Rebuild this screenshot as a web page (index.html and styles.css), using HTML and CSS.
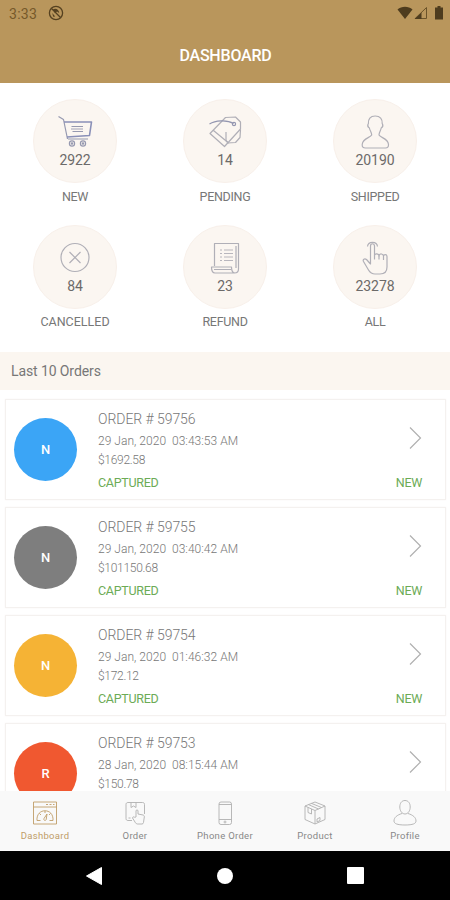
FILE: index.html
```html
<!DOCTYPE html>
<html lang="en">
<head>
    <meta charset="UTF-8">
    <meta name="viewport" content="width=device-width, initial-scale=1.0">
    <title>Dashboard</title>
    <link rel="stylesheet" href="styles.css">
</head>
<body>
    <div class="app">
        <header class="header">
            <div class="status-bar">
                <span class="clock">3:33</span>
                <svg class="status-app" width="16" height="16" viewBox="0 0 16 16">
                    <circle cx="8" cy="8" r="6.6" fill="none" stroke="#554120" stroke-width="1.3"/>
                    <path d="M5 4.2c3-1.6 6 .3 6.2 3.8l-2.2-1.5L7 8.2zM4.2 8l3 3.5-2 .2z" fill="#554120"/>
                    <path d="M3.5 3.5l9 9" stroke="#554120" stroke-width="1.2"/>
                </svg>
                <div class="status-icons">
                    <svg width="16" height="14" viewBox="0 0 16 14">
                        <path d="M.5 3.5C4.500-.3 11.500-.3 15.500 3.500L8 13z" fill="#4e3c1e"/>
                    </svg>
                    <svg width="14" height="14" viewBox="0 0 14 14">
                        <path d="M12.5 1.5v11H1.2z" fill="none" stroke="#6b5329" stroke-width="1"/>
                        <path d="M7.5 6.5V13H.5z" fill="#4e3c1e"/>
                    </svg>
                    <svg class="battery" width="8" height="14" viewBox="0 0 8 14">
                        <path d="M2.5 0h3v1.500H8v12H0v-12h2.500z" fill="#4e3c1e"/>
                    </svg>
                </div>
            </div>
            <h1 class="title">DASHBOARD</h1>
        </header>

        <main class="content">
            <section class="stats">
                <div class="stat">
                    <div class="stat-circle">
                        <svg class="stat-icon blue" viewBox="0 0 36 34">
                            <path d="M1.5 1.500l5 3 4 19.500"/>
                            <path class="basket" d="M7 7h27.500l-2 13.500L10 22"/>
                            <path d="M11 24h20M14.500 11.500H26M15.500 16.500H26"/>
                            <path class="thin" d="M14 14h12"/>
                            <circle cx="15" cy="28.500" r="2.600"/><circle cx="15" cy="28.500" r=".7"/>
                            <circle cx="26" cy="28.500" r="2.600"/><circle cx="26" cy="28.500" r=".7"/>
                        </svg>
                        <span class="stat-number">2922</span>
                    </div>
                    <div class="stat-label">NEW</div>
                </div>
                <div class="stat">
                    <div class="stat-circle">
                        <svg class="stat-icon" viewBox="0 0 36 34">
                            <path d="M3 18.500L18.500 2.500l10-.5 5 5v7L17.500 31.500zM6.500 15.500l14.500 12"/>
                            <path d="M33.500 14.500l-.5 8-4.500 5-8 .5M19 17v8.500l2.500 3"/>
                            <path class="ink" d="M2.500 9C8 5.500 20 4.500 26.500 8.500"/>
                            <circle class="ink" cx="27" cy="9" r="1.600"/>
                        </svg>
                        <span class="stat-number">14</span>
                    </div>
                    <div class="stat-label">PENDING</div>
                </div>
                <div class="stat">
                    <div class="stat-circle">
                        <svg class="stat-icon" viewBox="0 0 36 34">
                            <path d="M18.200 1c5 0 7.300 3 7 7.500 1 1.500.5 3.500-1 4.500-.5 3-2.200 4-2.200 7 1.500 3 9 3 9.500 9.500.2 2.500-1 3.500-3 3.500h-20c-2.500 0-3.500-1-3.300-3.500.5-6.500 8-6.500 9.500-9.500 0-3-1.800-4-2.300-7-1.500-1-2-3-1-4.500-.3-4.500 1.800-7.500 6.800-7.500z"/>
                        </svg>
                        <span class="stat-number">20190</span>
                    </div>
                    <div class="stat-label">SHIPPED</div>
                </div>
                <div class="stat">
                    <div class="stat-circle">
                        <svg class="stat-icon" viewBox="0 0 36 34">
                            <circle cx="18" cy="16.500" r="14"/>
                            <path d="M12.500 11l11 11M23.500 11l-11 11"/>
                        </svg>
                        <span class="stat-number">84</span>
                    </div>
                    <div class="stat-label cancelled">CANCELLED</div>
                </div>
                <div class="stat">
                    <div class="stat-circle">
                        <svg class="stat-icon" viewBox="0 0 36 34">
                            <path d="M7.500 25V2.500h24V28c0 2.500-1.500 4-4 4H8c-2.500 0-3.500-2-3.500-6h20c0 4 1 6 3.500 6M29 5v22M7 28.500h17"/>
                            <path class="thin" d="M13 9h2M17 9h9M13 12.500h2M17 12.500h9M13 16h2M17 16h9M13 19.500h2M17 19.500h9"/>
                        </svg>
                        <span class="stat-number">23</span>
                    </div>
                    <div class="stat-label">REFUND</div>
                </div>
                <div class="stat">
                    <div class="stat-circle">
                        <svg class="stat-icon" viewBox="0 0 36 34">
                            <path d="M13.500 23l-4-4.500c-2-1.500-4 0-3 2l5 8.500c1.500 2.500 3.500 4 6.500 4h5c4.500 0 7-2.500 7-7V15.500c0-2.500-3.500-2.500-3.500 0 0-3-4-3.500-4.500-.5 0-2.500-4-3-4.500-.5V5c0-3-4-3-4 0z"/>
                            <path d="M17.500 14.500v4M22 15v3.500M26.500 16v3M10.500 5.500c.5-5.500 9.500-5.500 10 0"/>
                        </svg>
                        <span class="stat-number">23278</span>
                    </div>
                    <div class="stat-label">ALL</div>
                </div>
            </section>

            <h2 class="section-title">Last 10 Orders</h2>

            <section class="orders">
                <article class="order">
                    <div class="avatar blue-bg">N</div>
                    <div class="order-info">
                        <div class="order-id">ORDER # 59756</div>
                        <div class="order-date">29 Jan, 2020&nbsp; 03:43:53 AM</div>
                        <div class="order-price">$1692.58</div>
                        <div class="order-state">CAPTURED</div>
                    </div>
                    <div class="order-side">
                        <svg class="chevron" viewBox="0 0 13 24"><path d="M1 1.500L11.500 12 1 22.500"/></svg>
                        <span class="order-tag">NEW</span>
                    </div>
                </article>
                <article class="order">
                    <div class="avatar gray-bg">N</div>
                    <div class="order-info">
                        <div class="order-id">ORDER # 59755</div>
                        <div class="order-date">29 Jan, 2020&nbsp; 03:40:42 AM</div>
                        <div class="order-price">$101150.68</div>
                        <div class="order-state">CAPTURED</div>
                    </div>
                    <div class="order-side">
                        <svg class="chevron" viewBox="0 0 13 24"><path d="M1 1.500L11.500 12 1 22.500"/></svg>
                        <span class="order-tag">NEW</span>
                    </div>
                </article>
                <article class="order">
                    <div class="avatar yellow-bg">N</div>
                    <div class="order-info">
                        <div class="order-id">ORDER # 59754</div>
                        <div class="order-date">29 Jan, 2020&nbsp; 01:46:32 AM</div>
                        <div class="order-price">$172.12</div>
                        <div class="order-state">CAPTURED</div>
                    </div>
                    <div class="order-side">
                        <svg class="chevron" viewBox="0 0 13 24"><path d="M1 1.500L11.500 12 1 22.500"/></svg>
                        <span class="order-tag">NEW</span>
                    </div>
                </article>
                <article class="order">
                    <div class="avatar red-bg">R</div>
                    <div class="order-info">
                        <div class="order-id">ORDER # 59753</div>
                        <div class="order-date">28 Jan, 2020&nbsp; 08:15:44 AM</div>
                        <div class="order-price">$150.78</div>
                    </div>
                    <div class="order-side">
                        <svg class="chevron" viewBox="0 0 13 24"><path d="M1 1.500L11.500 12 1 22.500"/></svg>
                    </div>
                </article>
            </section>
        </main>

        <nav class="tabs">
            <a class="tab active">
                <svg class="tab-icon" viewBox="0 0 26 26">
                    <path d="M1.500 2h23v22h-23zM1.500 7h23M14 4.500h2M17.500 4.500h2M21 4.500h1.500"/>
                    <path d="M5 20.500c-1-13 17-13 16 0h-3.500M5 20.500h3.500M13 11v2M7.500 13.500L9 15M18.500 13.500L17 15"/>
                    <path d="M15 14l-3 4.500c-.7 2 1.500 2.800 2.200 1z"/>
                </svg>
                <span>Dashboard</span>
            </a>
            <a class="tab">
                <svg class="tab-icon" viewBox="0 0 26 26">
                    <path d="M10 20.500H6c-1.300 0-2-.7-2-2V4.500c0-1.300.7-2 2-2h14.500c1.300 0 2 .7 2 2V14M9 2.500v5l2.500-1.500L14 7.500v-5M6.500 18h2"/>
                    <path d="M14 17v-6c0-1.500 2-1.500 2 0v3l5 1c1 .3 1.500 1 1.300 2l-.8 5.500c-.2 1-.7 1.500-1.500 1.500h-4.500c-1 0-1.500-.5-2-1.200L10.500 18c0-1.200 1.500-1.500 2.200-.7z"/>
                </svg>
                <span>Order</span>
            </a>
            <a class="tab">
                <svg class="tab-icon" viewBox="0 0 26 26">
                    <rect x="7" y="2" width="12.500" height="22.500" rx="2"/>
                    <path d="M7 4.500h12.500M7 19.500h12.500"/>
                    <circle cx="13" cy="22" r="1"/>
                </svg>
                <span>Phone Order</span>
            </a>
            <a class="tab">
                <svg class="tab-icon" viewBox="0 0 26 26">
                    <path d="M13 2l10 4v13.500L13 24 3 19.500V6zM3 6l10 4.500L23 6M13 10.500V24M6.500 4.600l10 4.400M9.500 3.400l10 4.100M6 7.500v5L9.500 14V9M15 19l3-1.500v3L15 22z"/>
                </svg>
                <span>Product</span>
            </a>
            <a class="tab">
                <svg class="tab-icon" viewBox="0 0 26 26">
                    <path d="M13 .5c3.500 0 5.200 3 5.200 6.500S16.200 14 13 14s-5.200-3.500-5.200-7S9.500.5 13 .5z"/>
                    <path d="M10 13.500C5 15 2 17.500 2 21c0 2.500 3 4 11 4s11-1.500 11-4c0-3.500-3-6-8-7.500"/>
                </svg>
                <span>Profile</span>
            </a>
        </nav>

        <!-- Android navigation buttons -->
        <div class="android-nav">
            <svg width="16" height="18" viewBox="0 0 16 18"><path d="M.5 9l15-8.500v17z" fill="#fff" stroke="#fff" stroke-linejoin="round"/></svg>
            <div class="home-button"></div>
            <div class="recent-button"></div>
        </div>
    </div>
</body>
</html>
```

FILE: styles.css
```css
* {
    margin: 0;
    padding: 0;
    box-sizing: border-box;
}

body {
    font-family: Roboto, sans-serif;
    background: #fff;
    color: #777;
}

.app {
    width: 450px;
    height: 900px;
    display: flex;
    flex-direction: column;
    overflow: hidden;
}

.header {
    height: 83px;
    flex-shrink: 0;
    background: #b9965c;
}

.status-bar {
    height: 27px;
    padding: 0 7px 0 9px;
    display: flex;
    align-items: center;
}

.clock {
    font-size: 14px;
    letter-spacing: 0.3px;
    color: #76592a;
}

.status-app {
    margin-left: 11px;
    margin-top: -1px;
}

.status-icons {
    display: flex;
    align-items: center;
    gap: 1px;
    margin-left: auto;
    margin-top: -1px;
}

.battery {
    margin-left: 6px;
}

.title {
    font-size: 16px;
    font-weight: 500;
    line-height: 58px;
    letter-spacing: -0.2px;
    padding-left: 1px;
    text-align: center;
    color: #fff;
}

.content {
    flex: 1;
    min-height: 0;
    overflow: hidden;
}

/* Order counters */
.stats {
    height: 269px;
    padding-top: 16px;
    display: grid;
    grid-template-columns: repeat(3, 150px);
    grid-template-rows: 125px 125px;
    row-gap: 0.5px;
}

.stat {
    display: flex;
    flex-direction: column;
    align-items: center;
}

.stat-circle {
    width: 84px;
    height: 84px;
    border: 1px solid #f8f0ea;
    border-radius: 50%;
    background: #fbf6f1;
    display: flex;
    flex-direction: column;
    align-items: center;
    padding-top: 15px;
}

.stat-icon {
    width: 36px;
    height: 34px;
    flex-shrink: 0;
    fill: none;
    stroke: #b0afb7;
    stroke-width: 1.2;
    stroke-linejoin: round;
}

.stat-icon.blue {
    stroke: #9699b0;
}

.stat-icon .thin {
    stroke-width: 0.9;
}

.stat-icon .basket {
    stroke: #8a90b8;
    stroke-width: 1.6;
}

.stat-icon .ink {
    stroke: #9396b0;
}

.stat-number {
    font-size: 14px;
    line-height: 20px;
    margin-top: 1px;
    letter-spacing: -0.1px;
    color: #6c6a69;
}

.stat-label {
    font-size: 12.5px;
    line-height: 20px;
    margin-top: 3.5px;
    letter-spacing: -0.3px;
    color: #777;
}

.stat-label.cancelled {
    letter-spacing: 0;
}

.section-title {
    height: 38px;
    padding-left: 11px;
    font-size: 14px;
    font-weight: 400;
    line-height: 38px;
    letter-spacing: -0.1px;
    background: #fbf6f0;
    color: #777;
}

/* Order list */
.orders {
    padding: 9px 4px 0 5px;
    display: flex;
    flex-direction: column;
    gap: 7px;
}

.order {
    height: 101px;
    flex-shrink: 0;
    display: flex;
    padding: 9px 23px 0 8px;
    border: 1px solid #f4f1ef;
    box-shadow: 0 0 2px #f8f6f4;
}

.avatar {
    width: 63px;
    height: 63px;
    margin-top: 9px;
    border-radius: 50%;
    font-size: 13px;
    font-weight: 500;
    line-height: 64px;
    text-align: center;
    color: #fff;
}

.blue-bg {
    background: #3ba5f6;
}

.gray-bg {
    background: #7e7e7e;
}

.yellow-bg {
    background: #f5b335;
}

.red-bg {
    background: #f05830;
}

.order-info {
    margin-left: 21px;
    font-size: 12px;
    font-weight: 300;
    line-height: 21px;
    color: #777;
}

.order-id {
    font-size: 14px;
    letter-spacing: -0.05px;
}

.order-date {
    line-height: 22px;
    letter-spacing: 0.03px;
}

.order-price {
    line-height: 14px;
    margin: 1px 0 5px;
    letter-spacing: -0.3px;
}

.order-state,
.order-tag {
    font-size: 12.5px;
    font-weight: 400;
    line-height: 21px;
    letter-spacing: -0.3px;
    color: #6cab56;
}

.order-side {
    margin-left: auto;
    display: flex;
    flex-direction: column;
    align-items: flex-end;
}

.chevron {
    width: 13px;
    height: 24px;
    margin: 17px 0 22px;
    fill: none;
    stroke: #b0b0b0;
    stroke-width: 1.2;
}

/* Bottom tabs */
.tabs {
    height: 60px;
    flex-shrink: 0;
    display: grid;
    grid-template-columns: repeat(5, 1fr);
    background: #f9f9f9;
}

.tab {
    display: flex;
    flex-direction: column;
    align-items: center;
    padding-top: 9px;
    font-size: 9.5px;
    line-height: 14px;
    letter-spacing: 0.3px;
    color: #888;
}

.tab.active {
    color: #bf9d68;
}

.tab-icon {
    width: 26px;
    height: 26px;
    margin-bottom: 3px;
    fill: none;
    stroke: #b0b0b0;
    stroke-width: 0.9;
    stroke-linejoin: round;
}

.tab.active .tab-icon {
    stroke: #bf9d68;
}

.android-nav {
    height: 49px;
    flex-shrink: 0;
    background: #000;
    display: flex;
    align-items: center;
    justify-content: space-between;
    padding: 0 86px;
}

.home-button {
    width: 16px;
    height: 16px;
    border-radius: 50%;
    background: #fff;
}

.recent-button {
    width: 17px;
    height: 17px;
    border-radius: 1px;
    background: #fff;
}
```
